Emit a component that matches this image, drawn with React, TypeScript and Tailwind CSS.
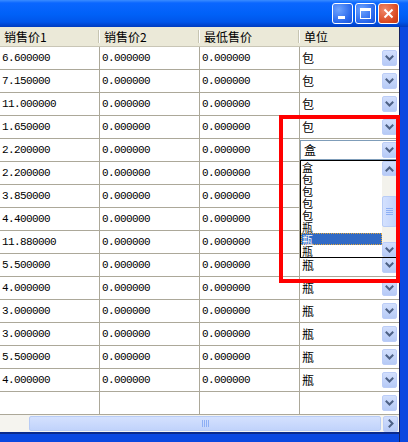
import React from "react";

const rows: [string, string][] = [
  ["6.600000", "包"],
  ["7.150000", "包"],
  ["11.000000", "包"],
  ["1.650000", "包"],
  ["2.200000", "盒"],
  ["2.200000", ""],
  ["3.850000", ""],
  ["4.400000", ""],
  ["11.880000", ""],
  ["5.500000", "瓶"],
  ["4.000000", "瓶"],
  ["3.000000", "瓶"],
  ["3.000000", "瓶"],
  ["5.500000", "瓶"],
  ["4.000000", "瓶"],
  ["", ""],
];

const listItems = ["盒", "包", "包", "包", "包", "瓶", "瓶", "瓶"];

const num = "font-['Liberation_Mono',monospace] text-[11px] tracking-[-0.6px] text-black";
const cjk = "font-['Noto_Sans_CJK_SC','Noto_Sans',sans-serif] text-[12px] leading-[12px] text-black";

function Chevron({ dir = "down" }: { dir?: "down" | "up" | "right" }) {
  const d =
    dir === "down" ? "M1.5 1.5 L4.5 4.5 L7.5 1.5" : dir === "up" ? "M1.5 4.5 L4.5 1.5 L7.5 4.5" : "M1.5 1.5 L4.5 4.5 L1.5 7.5";
  const w = dir === "right" ? 6 : 9;
  const h = dir === "right" ? 9 : 6;
  return (
    <svg width={w} height={h} viewBox={`0 0 ${w} ${h}`}>
      <path d={d} stroke="#4D6185" strokeWidth="2" fill="none" strokeLinecap="square" />
    </svg>
  );
}

function XpButton({ dir = "down", cls = "" }: { dir?: "down" | "up" | "right"; cls?: string }) {
  return (
    <div
      className={`flex items-center justify-center rounded-[2px] border border-[#BCCDF7] bg-[linear-gradient(to_bottom,#D2DFFD,#B6CAF6)] ${cls}`}
    >
      <Chevron dir={dir} />
    </div>
  );
}

function CaptionButton({ kind }: { kind: "min" | "max" | "close" }) {
  const bg =
    kind === "close"
      ? "bg-[radial-gradient(circle_at_30%_30%,#F0896A,#D9471F_70%,#C23A16)]"
      : "bg-[radial-gradient(circle_at_30%_30%,#6FA4FF,#2766EB_70%,#1C52D6)]";
  return (
    <div className={`relative h-[21px] w-[21px] rounded-[3px] border border-white ${bg}`}>
      {kind === "min" && <div className="absolute left-[5px] top-[12px] h-[3px] w-[7px] bg-white" />}
      {kind === "max" && (
        <div className="absolute left-[4px] top-[4px] h-[11px] w-[11px] border border-t-[3px] border-white" />
      )}
      {kind === "close" && (
        <svg className="absolute left-[4px] top-[4px]" width="11" height="11" viewBox="0 0 11 11">
          <path d="M1.5 1.5 L9.5 9.5 M9.5 1.5 L1.5 9.5" stroke="white" strokeWidth="2" />
        </svg>
      )}
    </div>
  );
}

export default function App() {
  return (
    <div className="relative flex h-[442px] w-[408px] flex-col overflow-hidden bg-[#0A48E0] font-['Noto_Sans_CJK_SC',sans-serif]">
      {/* title bar */}
      <div className="flex h-[27px] shrink-0 items-start justify-end gap-[2px] bg-[linear-gradient(to_bottom,#3A8CFF_0px,#0A66FF_3px,#0061F8_14px,#0055EA_22px,#003BBF_27px)] pr-[9px] pt-[3px]">
        <CaptionButton kind="min" />
        <CaptionButton kind="max" />
        <CaptionButton kind="close" />
      </div>

      <div className="flex flex-1">
        <div className="flex w-[399px] flex-col">
          {/* header */}
          <div className="flex h-[20px] shrink-0 border-b border-[#C9C6B6] bg-[#EBE9D8]">
            {["销售价1", "销售价2", "最低售价", "单位"].map((h, i) => (
              <div key={h} className={`flex items-center justify-between ${i === 3 ? "w-[99px]" : "w-[100px]"}`}>
                <span className={`${cjk} pl-[4px]`}>{h}</span>
                {i < 3 && <div className="h-[13px] w-[2px] border-l border-r border-l-[#C7C5B2] border-r-white" />}
              </div>
            ))}
          </div>

          {/* rows */}
          {rows.map(([p1, unit], r) => (
            <div key={r} className="flex h-[23px] shrink-0 border-b border-[#ACA899] bg-white">
              <div className={`flex w-[100px] items-center border-r border-[#ACA899] pl-[2px] ${num}`}>{p1}</div>
              <div className={`flex w-[100px] items-center border-r border-[#ACA899] pl-[2px] ${num}`}>
                {r < 15 ? "0.000000" : ""}
              </div>
              <div className={`flex w-[100px] items-center border-r border-[#ACA899] pl-[2px] ${num}`}>
                {r < 15 ? "0.000000" : ""}
              </div>
              <div className="flex w-[99px] items-center">
                {r === 4 ? (
                  <div className="flex h-[20px] w-[98px] items-center justify-between border border-[#7F9DB9] bg-white">
                    <span className={`${cjk} pl-[3px]`}>{unit}</span>
                    <XpButton cls="h-[16px] w-[15px]" />
                  </div>
                ) : (
                  <div className="flex w-full items-center justify-between pr-[2px]">
                    <span className={`${cjk} pl-[2px]`}>{unit}</span>
                    <XpButton cls="h-[16px] w-[15px]" />
                  </div>
                )}
              </div>
            </div>
          ))}

          {/* horizontal scrollbar */}
          <div className="flex h-[17px] shrink-0 items-center bg-[#F5F4EF] pl-[29px] pr-[1px]">
            <div className="flex h-[15px] w-[353px] items-center justify-center rounded-[2px] border border-[#B8CCF6] bg-[linear-gradient(to_bottom,#D4E1FE,#C1D3FB)]">
              <div className="flex gap-[1px]">
                {[0, 1, 2, 3].map((i) => (
                  <div key={i} className="h-[7px] w-[1px] bg-[#8DAFF4]" />
                ))}
              </div>
            </div>
            <XpButton dir="right" cls="ml-[2px] h-[16px] w-[15px]" />
          </div>
          <div className="h-[2px] shrink-0 bg-[#0A2A8C]" />
          <div className="flex-1" />
        </div>
        <div className="w-px bg-[#14205E]" />
      </div>

      {/* dropdown list */}
      <div className="absolute left-[300px] top-[160px] flex h-[98px] w-[98px] border border-black bg-white">
        <div className="flex w-[81px] flex-col">
          {listItems.map((t, i) => (
            <div
              key={i}
              className={`h-[12px] font-['Noto_Sans_CJK_SC','Noto_Sans',sans-serif] text-[11px] leading-[12px] ${
                i === 6
                  ? "border border-dotted border-[#E5A83A] bg-[#316AC5] leading-[10px] text-white"
                  : "pl-[1px] text-black"
              }`}
            >
              {t}
            </div>
          ))}
        </div>
        <div className="flex w-[15px] flex-col bg-[#F3F2EC]">
          <XpButton dir="up" cls="h-[15px] w-[15px]" />
          <div className="h-[20px]" />
          <div className="flex h-[31px] w-[15px] items-center justify-center rounded-[2px] border border-[#B8CCF6] bg-[linear-gradient(to_right,#D4E1FE,#C1D3FB)]">
            <div className="flex flex-col gap-[1px]">
              {[0, 1, 2, 3].map((i) => (
                <div key={i} className="h-[1px] w-[7px] bg-[#8DAFF4]" />
              ))}
            </div>
          </div>
          <div className="flex-1" />
          <XpButton dir="down" cls="h-[15px] w-[15px]" />
        </div>
      </div>

      {/* red highlight */}
      <div className="absolute left-[279px] top-[115px] h-[168px] w-[121px] border-[4px] border-[#FF0000]" />
    </div>
  );
}
